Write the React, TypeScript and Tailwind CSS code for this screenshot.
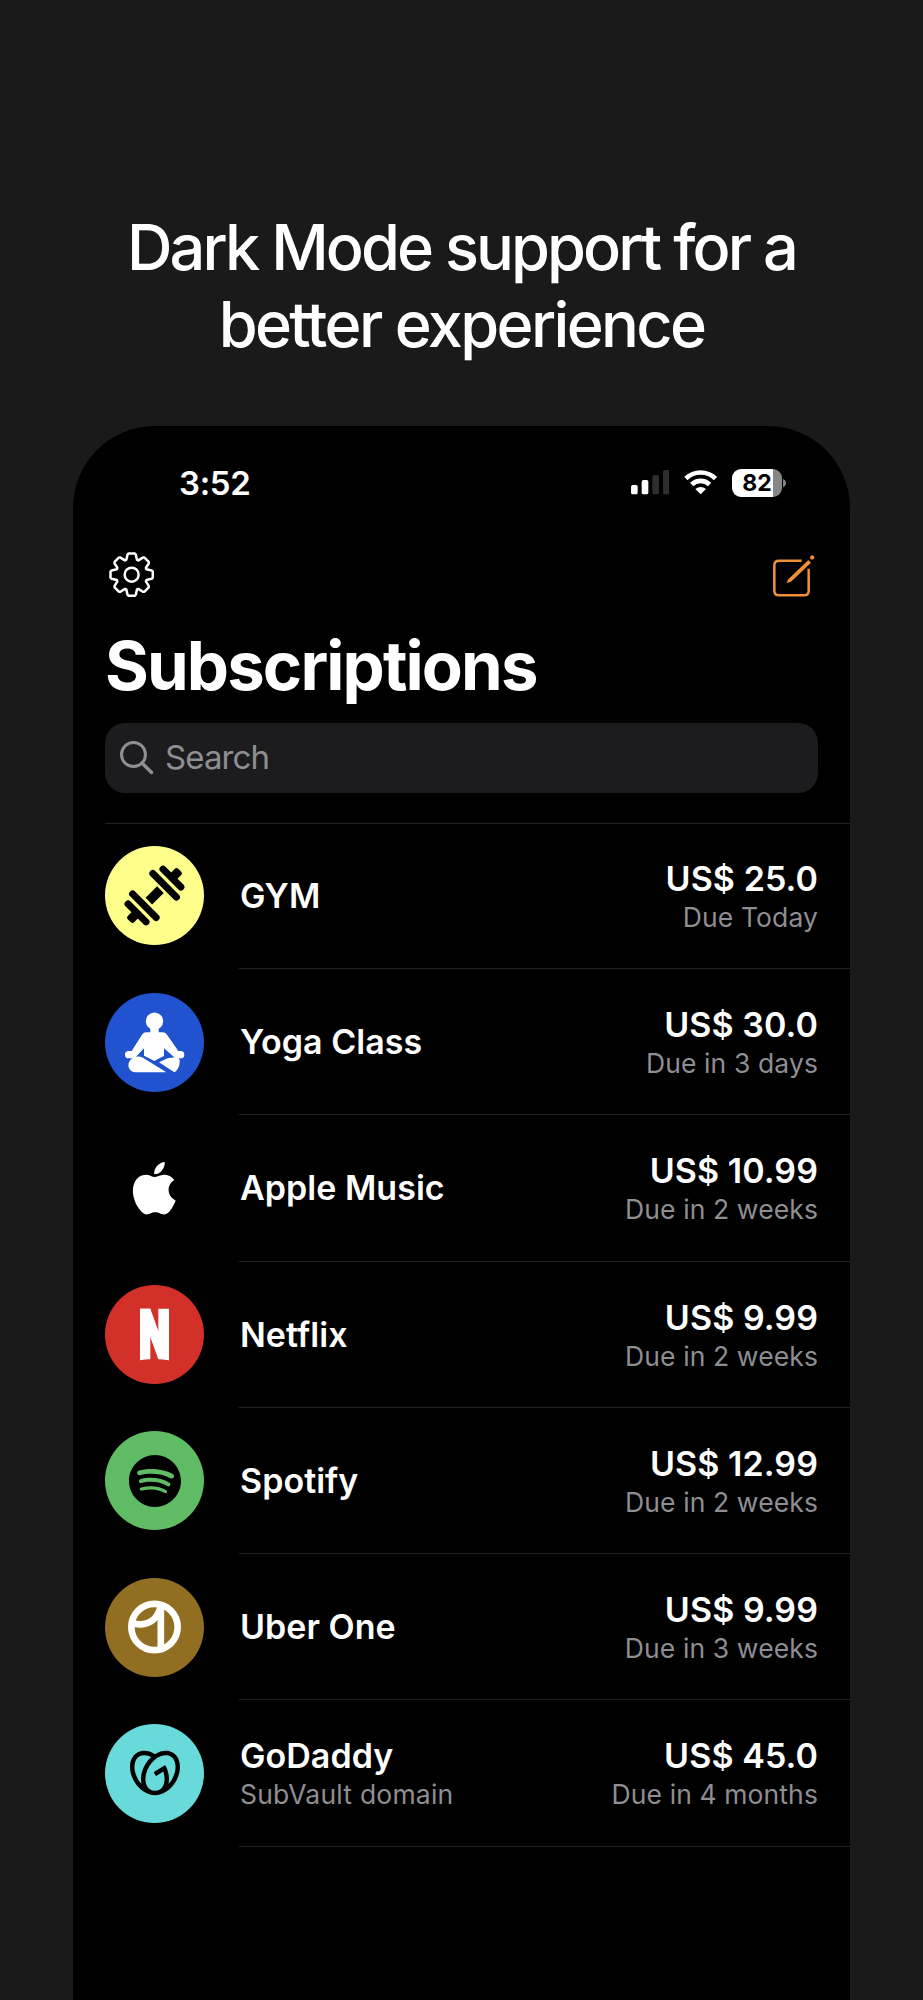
import type { ReactNode } from 'react';
import { SiApple, SiGodaddy, SiSpotify } from 'react-icons/si';

type Subscription = {
  name: string;
  note?: string;
  price: string;
  due: string;
  color: string;
  icon: ReactNode;
};

function DumbbellIcon() {
  return (
    <svg viewBox="-148.5 -148.5 297 297" className="h-full w-full" stroke="#000" strokeLinecap="round">
      <g transform="rotate(-45)">
        <rect x="-24" y="-14" width="49" height="28" fill="#000" stroke="none" />
        <path strokeWidth="21" d="M43 -50V50M74 -38V38M-43 -50V50M-74 -38V38" />
        <rect x="74" y="-13.5" width="33" height="27" rx="8" fill="#000" stroke="none" />
        <rect x="-107" y="-13.5" width="33" height="27" rx="8" fill="#000" stroke="none" />
      </g>
    </svg>
  );
}

function YogaIcon() {
  return (
    <svg viewBox="0 0 297 297" className="h-full w-full" fill="#fff">
      <circle cx="148.500" cy="84.500" r="26" />
      <path d="M136 104h25v14h12q8 0 13 7l34 49h7a10.500 10.500 0 0 1 0 22h-16l-34-30v23q-14 6-29 15q-14-8-31-16v-22l-28 30H71a10.500 10.500 0 0 1 0-22h9l31-49q5-7 13-7h12z" />
      <path d="M92 191q12-2 22 3l70 44H90q-16-2-20-19q0-22 22-28z" />
      <path d="M162 208l26-12q17-5 34 0q4 6 1 19q-3 15-15 23z" />
    </svg>
  );
}

function NetflixIcon() {
  return (
    <svg viewBox="0 0 297 297" className="h-full w-full" fill="#fff">
      <path d="M105 71h31v152q-16 0-31 3z" />
      <path d="M160 71h32v155l-32-6z" />
      <path d="M105 71h31l56 155q-16-3-32-3l-55-152z" />
    </svg>
  );
}

function UberOneIcon() {
  return (
    <svg viewBox="0 0 297 297" className="h-full w-full" fill="none" stroke="#fff" strokeWidth="20">
      <circle cx="148.500" cy="147" r="69.500" />
      <path d="M82 134q12 6 28 5q43-4 56-50" />
      <path strokeWidth="20" d="M167.500 88v122" />
    </svg>
  );
}

const subscriptions: Subscription[] = [
  { name: 'GYM', price: 'US$ 25.0', due: 'Due Today', color: 'bg-[#feff8b]', icon: <DumbbellIcon /> },
  { name: 'Yoga Class', price: 'US$ 30.0', due: 'Due in 3 days', color: 'bg-[#2153d0]', icon: <YogaIcon /> },
  {
    name: 'Apple Music',
    price: 'US$ 10.99',
    due: 'Due in 2 weeks',
    color: 'bg-black',
    icon: <SiApple className="size-[52.500px] text-white" />,
  },
  { name: 'Netflix', price: 'US$ 9.99', due: 'Due in 2 weeks', color: 'bg-[#d23028]', icon: <NetflixIcon /> },
  {
    name: 'Spotify',
    price: 'US$ 12.99',
    due: 'Due in 2 weeks',
    color: 'bg-[#60bc64]',
    icon: <SiSpotify className="size-[52px] text-black" />,
  },
  { name: 'Uber One', price: 'US$ 9.99', due: 'Due in 3 weeks', color: 'bg-[#916e21]', icon: <UberOneIcon /> },
  {
    name: 'GoDaddy',
    note: 'SubVault domain',
    price: 'US$ 45.0',
    due: 'Due in 4 months',
    color: 'bg-[#68dada]',
    icon: <SiGodaddy className="size-[50px] text-black" />,
  },
];

// Outline of an eight-toothed gear centred on 0,0
function gearPath() {
  const tooth = [
    [-16, -44.5],
    [-12.5, -60],
    [-9, -63.5],
    [9, -63.5],
    [12.5, -60],
    [16, -44.5],
  ];
  const points: string[] = [];
  for (let i = 0; i < 8; i++) {
    const a = (i * Math.PI) / 4;
    tooth.forEach(([x, y]) => {
      const px = x * Math.cos(a) - y * Math.sin(a);
      const py = x * Math.sin(a) + y * Math.cos(a);
      points.push(`${px.toFixed(2)} ${py.toFixed(2)}`);
    });
  }
  return `M${points.join('L')}Z`;
}

function StatusBar() {
  return (
    <div className="flex items-center justify-between pr-[64px] pl-[106px]">
      <span className="text-[33px] leading-10 font-semibold tracking-[-0.01em]">3:52</span>
      <div className="flex items-center">
        <svg viewBox="0 0 116 73" className="h-[24.300px] w-[38.700px]">
          <rect y="45" width="20" height="28" rx="5" fill="#fff" />
          <rect x="32" y="30" width="20" height="43" rx="5" fill="#fff" />
          <rect x="64" y="15" width="20" height="58" rx="5" fill="#2e2e2e" />
          <rect x="96" width="20" height="73" rx="5" fill="#2e2e2e" />
        </svg>
        <svg viewBox="0 0 100 73" className="ml-[14.300px] h-[24.300px] w-[33.300px]" fill="none" stroke="#fff" strokeWidth="14">
          <path d="M5.500 25.500a64 64 0 0 1 89 0" />
          <path d="M23 43.500a39 39 0 0 1 54 0" />
          <path d="M34 57q16-12 32 0L50 73z" fill="#fff" stroke="none" />
        </svg>
        <div className="ml-[14.700px] flex h-7 w-[50px] items-center justify-center overflow-hidden rounded-[9px] bg-linear-to-r from-white from-82% to-[#868686] to-82%">
          <span className="pl-px text-[23px] leading-7 font-bold text-black">82</span>
        </div>
        <svg viewBox="0 0 9 24" className="ml-[1.500px] h-2 w-[3px]">
          <path d="M0 0q9 3 9 12t-9 12z" fill="#868686" />
        </svg>
      </div>
    </div>
  );
}

function Toolbar() {
  return (
    <div className="flex items-start justify-between pr-[35px] pl-[35.700px]">
      <svg viewBox="-68 -68 136 136" className="mt-[0.500px] size-[45.300px]" fill="none" stroke="#fff" strokeWidth="7.500" strokeLinejoin="round">
        <path d={gearPath()} />
        <circle r="21" />
      </svg>
      <svg viewBox="0 0 126 126" className="mt-[3.500px] size-[42px]" fill="none" stroke="#f09037" strokeWidth="7.500">
        <path d="M86 17H18Q4 17 4 30v77q0 14 14 14h75q14 0 14-14V41" />
        <path d="M106 15l8 8-60 57-12 4q-1 0-1-1l5-10z" fill="#f09037" stroke="none" />
        <path d="M117.500 7.500l.500-.500" strokeWidth="12" strokeLinecap="round" />
      </svg>
    </div>
  );
}

function SearchField() {
  return (
    <div className="mx-8 flex h-[70px] items-center rounded-[20px] bg-[#1c1c1e] pl-[15px] text-[#8e8e93]">
      <svg viewBox="0 0 34 34" className="size-[34px]" fill="none" stroke="currentColor" strokeWidth="3">
        <circle cx="13.500" cy="13.500" r="12" />
        <path d="M22 22l9.500 9.500" strokeWidth="3.500" strokeLinecap="round" />
      </svg>
      <span className="ml-[11px] text-[33px] tracking-[-0.027em]">Search</span>
    </div>
  );
}

function SubscriptionRow({ item }: { item: Subscription }) {
  return (
    <li className="flex h-[146.250px] items-center pl-8">
      <div className={`mr-[35px] flex size-[99px] shrink-0 items-center justify-center rounded-full ${item.color}`}>
        {item.icon}
      </div>
      <div className="flex h-full flex-1 items-center justify-between border-b border-[#222224] pr-8 pl-px">
        <div className={item.note ? 'pt-[3px]' : 'pt-px'}>
          <h2 className="text-[34px] leading-10 font-semibold tracking-[0.001em]">{item.name}</h2>
          {item.note && <p className="text-[26.500px] leading-9 tracking-[0.008em] text-[#8e8e93]">{item.note}</p>}
        </div>
        <div className="pt-[3px] text-right">
          <p className="text-[34px] leading-10 font-semibold tracking-[0.002em]">{item.price}</p>
          <p className="text-[26.500px] leading-9 tracking-[0.004em] text-[#8e8e93]">{item.due}</p>
        </div>
      </div>
    </li>
  );
}

export default function App() {
  return (
    <div className="flex h-[2000px] w-[923px] flex-col bg-[#1a1a1a] font-[Inter,sans-serif] text-white">
      <h1 className="pt-[209px] text-center text-[63px] leading-[76.500px] font-medium">
        <span className="tracking-[-0.046em]">Dark Mode support for a</span>
        <br />
        <span className="tracking-[-0.042em]">better experience</span>
      </h1>

      <div className="mx-auto mt-[63.500px] w-[777px] flex-1 rounded-t-[82px] bg-black pt-[37px]">
        <StatusBar />
        <div className="mt-[49px]">
          <Toolbar />
        </div>
        <h2 className="mt-[28.500px] pl-8 text-[67px] leading-20 font-bold tracking-[-0.028em]">Subscriptions</h2>
        <div className="mt-[17px]">
          <SearchField />
        </div>
        <ul className="mt-[30px]">
          <li className="-mb-px ml-8 h-px bg-[#222224]" />
          {subscriptions.map((item) => (
            <SubscriptionRow key={item.name} item={item} />
          ))}
        </ul>
      </div>
    </div>
  );
}
